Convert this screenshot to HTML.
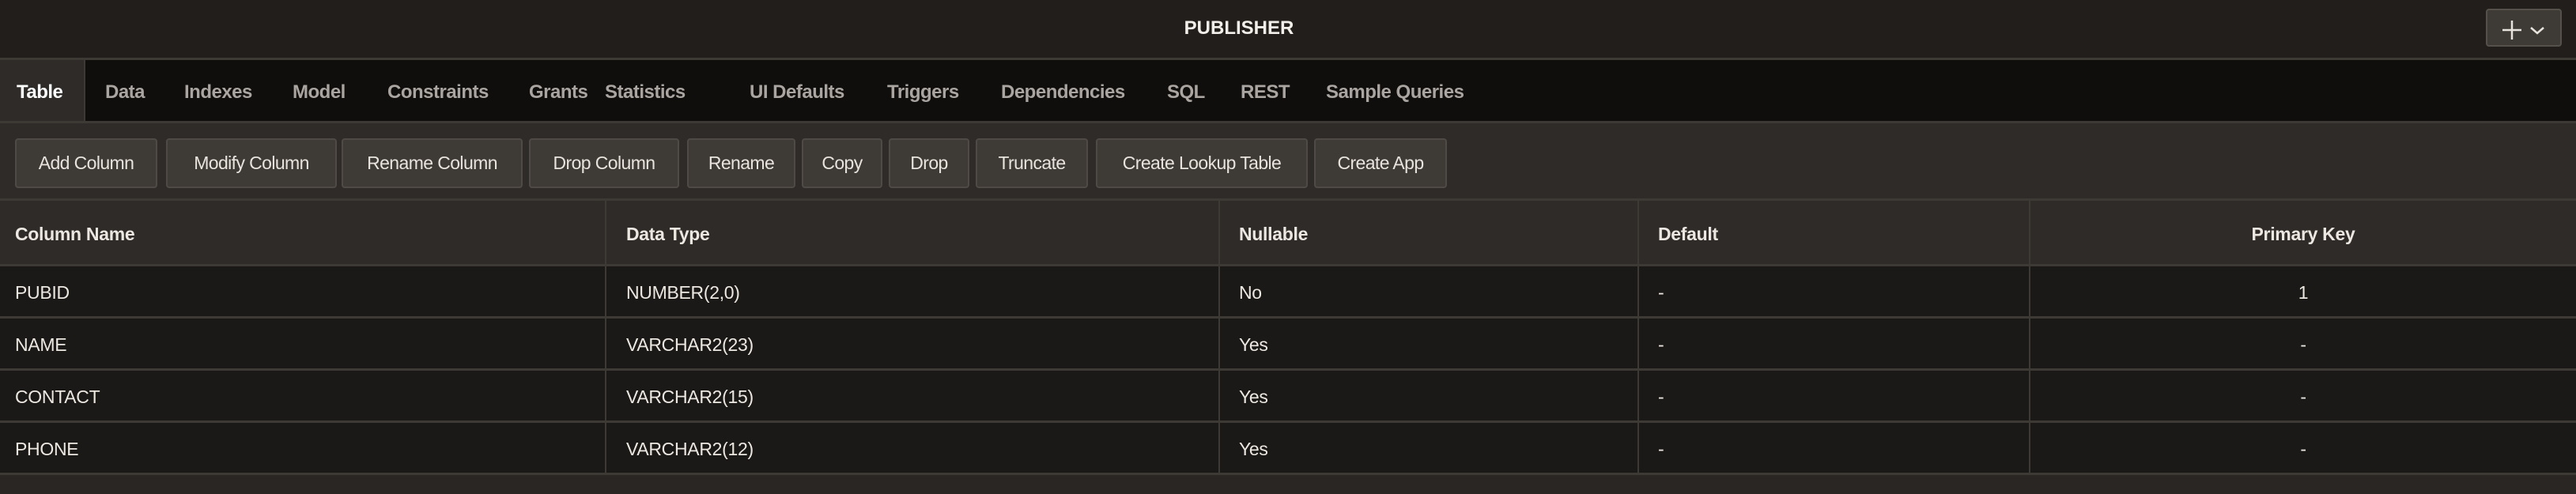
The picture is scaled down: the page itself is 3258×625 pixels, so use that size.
<!DOCTYPE html>
<html><head><meta charset="utf-8"><style>
*{margin:0;padding:0;box-sizing:border-box}
body{width:3258px;height:625px;background:#2a2623;font-family:"Liberation Sans",sans-serif;color:#ece7e1;position:relative;overflow:hidden}
div,span{position:absolute}
.hdr{left:0;top:0;width:3258px;height:76px;background:#221e1b;border-bottom:3px solid #3d3935}
.title{left:1367px;width:400px;top:22px;text-align:center;font-weight:bold;font-size:24px;color:#f2eee9}
.plus{left:3144px;top:11px;width:96px;height:48px;background:#3e3a35;border:2px solid #55504a;border-radius:4px}
.tabs{left:0;top:76px;width:3258px;height:80px;background:#0f0e0d;border-bottom:3px solid #3d3935}
.tab{top:27px;font-size:24px;font-weight:bold;color:#aaa5a0;letter-spacing:-0.5px}
.tbar{left:0;top:156px;width:3258px;height:98px;background:#2f2b28;border-bottom:3px solid #3d3935}
.btn{top:19px;height:63px;background:#3e3a35;border:2px solid #4f4a45;border-radius:4px;font-size:23px;color:#e8e3dd;text-align:center;line-height:59px;letter-spacing:-0.6px;white-space:nowrap}
.row{left:0;width:3258px;border-bottom:3px solid #3d3935}
.c{font-size:23px;white-space:nowrap;letter-spacing:-0.3px}
.v{width:2px;background:#3d3935}
</style></head><body>
<div class="hdr"><div class="title">PUBLISHER</div>
<div class="plus"><svg width="92" height="44" style="position:absolute;left:0;top:0"><path d="M31 13v24M19 25h24" stroke="#e8e3dd" stroke-width="2.5" fill="none"/><path d="M55 22l8 7 8-7" stroke="#e8e3dd" stroke-width="2.5" fill="none"/></svg></div></div>
<div class="tabs">
<div style="left:0;top:0;width:108px;height:77px;background:#2f2b28;border-right:2px solid #3d3935"></div>
<span class="tab" style="left:21px;color:#fff">Table</span>
<span class="tab" style="left:133px">Data</span>
<span class="tab" style="left:233px">Indexes</span>
<span class="tab" style="left:370px">Model</span>
<span class="tab" style="left:490px">Constraints</span>
<span class="tab" style="left:669px">Grants</span>
<span class="tab" style="left:765px">Statistics</span>
<span class="tab" style="left:948px">UI Defaults</span>
<span class="tab" style="left:1122px">Triggers</span>
<span class="tab" style="left:1266px">Dependencies</span>
<span class="tab" style="left:1476px">SQL</span>
<span class="tab" style="left:1569px">REST</span>
<span class="tab" style="left:1677px">Sample Queries</span>
</div>
<div class="tbar">
<span class="btn" style="left:19px;width:180px">Add Column</span>
<span class="btn" style="left:210px;width:216px">Modify Column</span>
<span class="btn" style="left:432px;width:229px">Rename Column</span>
<span class="btn" style="left:669px;width:190px">Drop Column</span>
<span class="btn" style="left:869px;width:137px">Rename</span>
<span class="btn" style="left:1014px;width:102px">Copy</span>
<span class="btn" style="left:1124px;width:102px">Drop</span>
<span class="btn" style="left:1234px;width:142px">Truncate</span>
<span class="btn" style="left:1386px;width:268px">Create Lookup Table</span>
<span class="btn" style="left:1662px;width:168px">Create App</span>
</div>
<div class="row" style="top:254px;height:83px;background:#2f2b28"></div>
<div class="row" style="top:337px;height:66px;background:#1b1917"></div>
<div class="row" style="top:403px;height:66px;background:#1b1917"></div>
<div class="row" style="top:469px;height:66px;background:#1b1917"></div>
<div class="row" style="top:535px;height:66px;background:#1b1917"></div>
<div class="v" style="left:765px;top:254px;height:347px"></div>
<div class="v" style="left:1541px;top:254px;height:347px"></div>
<div class="v" style="left:2071px;top:254px;height:347px"></div>
<div class="v" style="left:2566px;top:254px;height:347px"></div>
<span class="c" style="left:19px;top:283px;font-weight:bold">Column Name</span>
<span class="c" style="left:792px;top:283px;font-weight:bold">Data Type</span>
<span class="c" style="left:1567px;top:283px;font-weight:bold">Nullable</span>
<span class="c" style="left:2097px;top:283px;font-weight:bold">Default</span>
<span class="c" style="left:2568px;width:690px;text-align:center;top:283px;font-weight:bold">Primary Key</span>

<span class="c" style="left:19px;top:357px">PUBID</span><span class="c" style="left:792px;top:357px">NUMBER(2,0)</span><span class="c" style="left:1567px;top:357px">No</span><span class="c" style="left:2097px;top:357px">-</span><span class="c" style="left:2568px;width:690px;text-align:center;top:357px">1</span>
<span class="c" style="left:19px;top:423px">NAME</span><span class="c" style="left:792px;top:423px">VARCHAR2(23)</span><span class="c" style="left:1567px;top:423px">Yes</span><span class="c" style="left:2097px;top:423px">-</span><span class="c" style="left:2568px;width:690px;text-align:center;top:423px">-</span>
<span class="c" style="left:19px;top:489px">CONTACT</span><span class="c" style="left:792px;top:489px">VARCHAR2(15)</span><span class="c" style="left:1567px;top:489px">Yes</span><span class="c" style="left:2097px;top:489px">-</span><span class="c" style="left:2568px;width:690px;text-align:center;top:489px">-</span>
<span class="c" style="left:19px;top:555px">PHONE</span><span class="c" style="left:792px;top:555px">VARCHAR2(12)</span><span class="c" style="left:1567px;top:555px">Yes</span><span class="c" style="left:2097px;top:555px">-</span><span class="c" style="left:2568px;width:690px;text-align:center;top:555px">-</span>
</body></html>
